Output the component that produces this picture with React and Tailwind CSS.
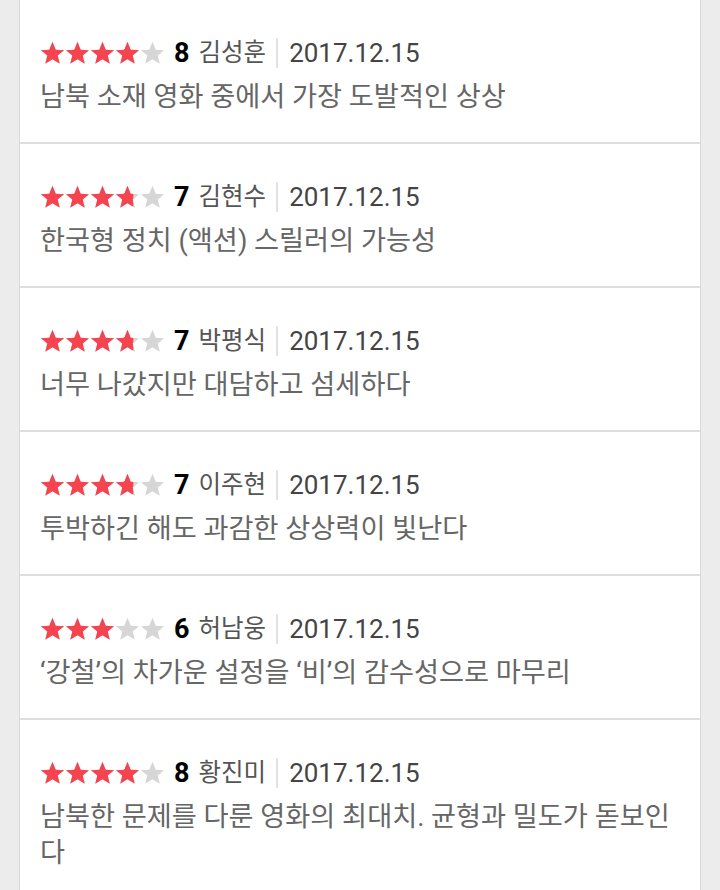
import React from 'react';

const reviews = [
  { rating: 8, name: '김성훈', date: '2017.12.15', text: '남북 소재 영화 중에서 가장 도발적인 상상' },
  { rating: 7, name: '김현수', date: '2017.12.15', text: '한국형 정치 (액션) 스릴러의 가능성' },
  { rating: 7, name: '박평식', date: '2017.12.15', text: '너무 나갔지만 대담하고 섬세하다' },
  { rating: 7, name: '이주현', date: '2017.12.15', text: '투박하긴 해도 과감한 상상력이 빛난다' },
  { rating: 6, name: '허남웅', date: '2017.12.15', text: '‘강철’의 차가운 설정을 ‘비’의 감수성으로 마무리' },
  { rating: 8, name: '황진미', date: '2017.12.15', text: '남북한 문제를 다룬 영화의 최대치. 균형과 밀도가 돋보인다' },
];

const STAR = 'M12 0.8l3.1 7.5 8 .5-6.1 5.1 2 7.8L12 17.5l-7 4.2 2-7.8L.9 8.8l8-.5z';

const Star = ({ fill }) => (
  <svg width="25" height="24" viewBox="0 0 24 23" className="shrink-0">
    <path d={STAR} fill="#d6d6d6" />
    {fill > 0 && (
      <path d={STAR} fill="#f5434f" style={{ clipPath: `inset(0 ${(1 - fill) * 50}% 0 0)` }} />
    )}
  </svg>
);

const Stars = ({ rating }) => (
  <div className="flex items-center">
    {[0, 1, 2, 3, 4].map((i) => {
      const v = rating / 2 - i;
      const fill = v >= 1 ? 1 : v >= 0.5 ? 0.5 : 0;
      return <Star key={i} fill={fill} />;
    })}
  </div>
);

const ReviewRow = ({ review }) => (
  <div className="border-b-2 border-[#dedede] pl-[20px] pr-[24px] pt-[35px] pb-[27px]">
    <div className="flex items-center h-[36px]">
      <Stars rating={review.rating} />
      <span className="ml-[9px] text-[27px] font-bold text-black">{review.rating}</span>
      <span className="ml-[9px] text-[24.5px] text-[#555]">{review.name}</span>
      <span className="ml-[10px] w-[2px] h-[30px] bg-[#e2e2e2]" />
      <span className="ml-[11px] text-[26px] text-[#444]">{review.date}</span>
    </div>
    <p className="mt-[8px] text-[27.2px] leading-[36px] text-[#666]">{review.text}</p>
  </div>
);

export default function App() {
  return (
    <div
      className="min-h-[890px] h-[890px] overflow-hidden bg-[#ececec] px-[19px]"
      style={{ fontFamily: 'Roboto, "Noto Sans CJK KR", sans-serif' }}
    >
      <div className="bg-white border-x border-[#d9d9d9] min-h-[890px]">
        {reviews.map((r, i) => (
          <ReviewRow key={i} review={r} />
        ))}
      </div>
    </div>
  );
}
